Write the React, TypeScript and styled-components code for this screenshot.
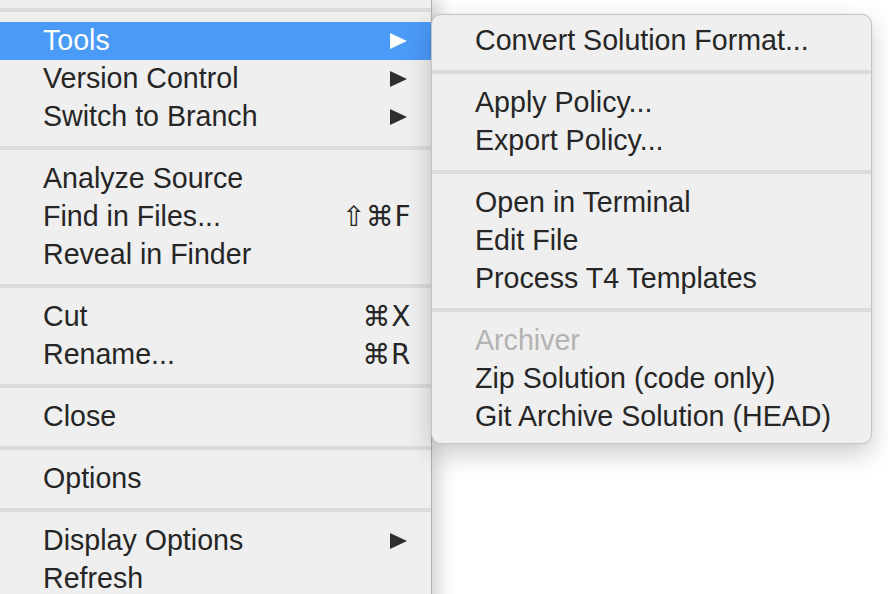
import React from "react";
import styled, { createGlobalStyle } from "styled-components";

const GlobalStyle = createGlobalStyle`
  html, body {
    margin: 0;
    padding: 0;
    background: #ffffff;
    overflow: hidden;
  }
  body {
    font-family: "Liberation Sans", "DejaVu Sans", sans-serif;
    -webkit-font-smoothing: antialiased;
  }
`;

const Screen = styled.div`
  position: relative;
  width: 888px;
  height: 594px;
  overflow: hidden;
  background: #ffffff;
`;

const MainMenu = styled.div`
  width: 431px;
  height: 640px;
  margin-top: -2px;
  background: #efefef;
  border-right: 1px solid #b0b0b0;
  box-shadow: 6px 0 18px rgba(0, 0, 0, 0.2);
  display: flex;
  flex-direction: column;
`;

const SubMenu = styled.div`
  position: absolute;
  left: 431px;
  top: 14px;
  width: 441px;
  box-sizing: border-box;
  padding: 7px 0;
  background: #efefef;
  border: 1px solid #c4c4c4;
  border-radius: 10px;
  box-shadow: 0 10px 26px rgba(0, 0, 0, 0.2), 0 0 2px rgba(0, 0, 0, 0.08);
  display: flex;
  flex-direction: column;
`;

const Separator = styled.div`
  height: 24px;
  display: flex;
  align-items: center;
  flex-shrink: 0;
  &::after {
    content: "";
    display: block;
    width: 100%;
    height: 4px;
    background: #dcdcdc;
  }
`;

const Item = styled.div<{ $active?: boolean; $disabled?: boolean }>`
  height: 38px;
  flex-shrink: 0;
  box-sizing: border-box;
  display: flex;
  align-items: center;
  padding: 0 20px 1px 43px;
  font-size: 28.6px;
  line-height: 35px;
  background: ${(p) => (p.$active ? "#4a9af8" : "transparent")};
  color: ${(p) => (p.$active ? "#ffffff" : p.$disabled ? "#b3b3b3" : "#262626")};
  white-space: nowrap;
`;

const Label = styled.span`
  flex: 1;
`;

const Shortcut = styled.span`
  font-family: "DejaVu Sans", "Liberation Sans", sans-serif;
  font-size: 28px;
  letter-spacing: 0.5px;
`;

const ArrowIcon = styled.svg`
  width: 17px;
  height: 16px;
  margin-right: 4px;
  margin-top: 1px;
  flex-shrink: 0;
`;

const Arrow = ({ active }: { active?: boolean }) => (
  <ArrowIcon viewBox="0 0 17 16">
    <polygon points="0,0 17,8 0,16" fill={active ? "#ffffff" : "#2e2e2e"} />
  </ArrowIcon>
);

type Entry =
  | { sep: true }
  | {
      sep?: false;
      label: string;
      shortcut?: string;
      arrow?: boolean;
      active?: boolean;
      disabled?: boolean;
    };

const mainEntries: Entry[] = [
  { sep: true },
  { label: "Tools", arrow: true, active: true },
  { label: "Version Control", arrow: true },
  { label: "Switch to Branch", arrow: true },
  { sep: true },
  { label: "Analyze Source" },
  { label: "Find in Files...", shortcut: "⇧⌘F" },
  { label: "Reveal in Finder" },
  { sep: true },
  { label: "Cut", shortcut: "⌘X" },
  { label: "Rename...", shortcut: "⌘R" },
  { sep: true },
  { label: "Close" },
  { sep: true },
  { label: "Options" },
  { sep: true },
  { label: "Display Options", arrow: true },
  { label: "Refresh" },
];

const subEntries: Entry[] = [
  { label: "Convert Solution Format..." },
  { sep: true },
  { label: "Apply Policy..." },
  { label: "Export Policy..." },
  { sep: true },
  { label: "Open in Terminal" },
  { label: "Edit File" },
  { label: "Process T4 Templates" },
  { sep: true },
  { label: "Archiver", disabled: true },
  { label: "Zip Solution (code only)" },
  { label: "Git Archive Solution (HEAD)" },
];

const renderEntries = (entries: Entry[]) =>
  entries.map((e, i) =>
    e.sep ? (
      <Separator key={i} />
    ) : (
      <Item key={i} $active={e.active} $disabled={e.disabled}>
        <Label>{e.label}</Label>
        {e.shortcut && <Shortcut>{e.shortcut}</Shortcut>}
        {e.arrow && <Arrow active={e.active} />}
      </Item>
    )
  );

export default function App() {
  return (
    <Screen>
      <GlobalStyle />
      <MainMenu>{renderEntries(mainEntries)}</MainMenu>
      <SubMenu>{renderEntries(subEntries)}</SubMenu>
    </Screen>
  );
}
